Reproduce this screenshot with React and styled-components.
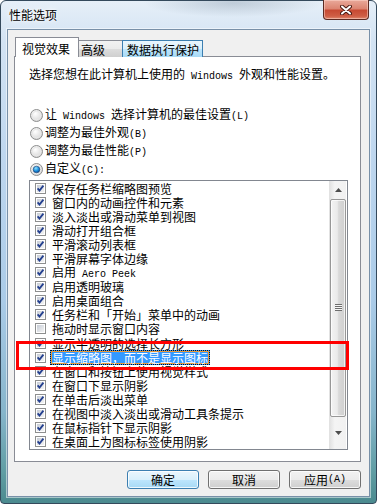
import React from 'react'
import styled, { createGlobalStyle } from 'styled-components'

const GlobalStyle = createGlobalStyle`
  html, body { margin: 0; padding: 0; background: #fff; }
  body {
    font-family: "Noto Sans CJK SC", "Liberation Sans", sans-serif;
    font-size: 12px;
    color: #000;
  }
`

const effects = [
  ['保存任务栏缩略图预览', true],
  ['窗口内的动画控件和元素', true],
  ['淡入淡出或滑动菜单到视图', true],
  ['滑动打开组合框', true],
  ['平滑滚动列表框', true],
  ['平滑屏幕字体边缘', true],
  ['启用 Aero Peek', true],
  ['启用透明玻璃', true],
  ['启用桌面组合', true],
  ['任务栏和「开始」菜单中的动画', true],
  ['拖动时显示窗口内容', false],
  ['显示半透明的选择长方形', true],
  ['显示缩略图，而不是显示图标', true, true],
  ['在窗口和按钮上使用视觉样式', true],
  ['在窗口下显示阴影', true],
  ['在单击后淡出菜单', true],
  ['在视图中淡入淡出或滑动工具条提示', true],
  ['在鼠标指针下显示阴影', true],
  ['在桌面上为图标标签使用阴影', true],
]

const radios = [
  ['让 Windows 选择计算机的最佳设置(L)', false],
  ['调整为最佳外观(B)', false],
  ['调整为最佳性能(P)', false],
  ['自定义(C):', true],
]

// SimSun draws ascii half width, so ascii runs get a 6px mono face
const mixed = (text) =>
  text.split(/([\x20-\x7e]+)/).map((part, i) =>
    /^[\x20-\x7e]+$/.test(part) ? <Latin key={i}>{part}</Latin> : part
  )

const CheckBox = ({ checked }) => (
  <svg width="11" height="11" viewBox="0 0 11 11">
    <defs>
      <linearGradient id="cbg" x1="0" y1="0" x2="1" y2="1">
        <stop offset="0" stopColor="#c6ccd6" />
        <stop offset="1" stopColor="#f4f4f4" />
      </linearGradient>
    </defs>
    <rect x="0.5" y="0.5" width="10" height="10" fill="#fff" stroke="#8e8f8f" />
    <rect x="2" y="2" width="7" height="7" fill="url(#cbg)" />
    {checked && (
      <path d="M2.6 5.4 L4.5 7.6 L8.4 2.6" fill="none" stroke="#233f8f" strokeWidth="1.8" />
    )}
  </svg>
)

const Radio = ({ checked }) => (
  <svg width="13" height="13" viewBox="0 0 13 13">
    <defs>
      <radialGradient id="rbg" cx="0.4" cy="0.35" r="0.7">
        <stop offset="0" stopColor="#ffffff" />
        <stop offset="1" stopColor="#d4d4d4" />
      </radialGradient>
      <radialGradient id="rdot" cx="0.4" cy="0.3" r="0.7">
        <stop offset="0" stopColor="#8fe0ff" />
        <stop offset="0.6" stopColor="#1c8fdc" />
        <stop offset="1" stopColor="#0b4f9a" />
      </radialGradient>
    </defs>
    <circle cx="6.5" cy="6.5" r="6" fill="url(#rbg)" stroke="#8e8f8f" />
    <circle cx="6.5" cy="6.5" r="4.2" fill="none" stroke="#e8e8e8" />
    {checked && <circle cx="6.5" cy="6.5" r="3.3" fill="url(#rdot)" stroke="#1b3f70" strokeWidth="0.6" />}
  </svg>
)

const App = () => {
  return (
    <>
      <GlobalStyle />
      <Win>
        <TitleBar>
          <Title>性能选项</Title>
          <Close>
            <svg width="12" height="10" viewBox="0 0 12 10">
              <path d="M2 1.5 L10 8.5 M10 1.5 L2 8.5" stroke="#4a1a12" strokeWidth="4" strokeLinecap="round" />
              <path d="M2 1.5 L10 8.5 M10 1.5 L2 8.5" stroke="#fff" strokeWidth="2" strokeLinecap="round" />
            </svg>
          </Close>
        </TitleBar>
        <Client>
          <TabRow>
            <Tab $active $pad="0 8px 0 6px">视觉效果</Tab>
            <Tab $pad="0 17px 0 1px">高级</Tab>
            <Tab $hover $pad="0 3px 0 4px">数据执行保护</Tab>
          </TabRow>
          <Panel>
            <Desc>{mixed('选择您想在此计算机上使用的 Windows 外观和性能设置。')}</Desc>
            <RadioGroup>
              {radios.map(([label, on]) => (
                <RadioRow key={label}>
                  <Radio checked={on} />
                  <span>{mixed(label)}</span>
                </RadioRow>
              ))}
            </RadioGroup>
            <ListBox>
              <Items>
                {effects.map(([label, on, sel]) => (
                  <Item key={label}>
                    <CheckBox checked={on} />
                    <ItemText $selected={sel}>{mixed(label)}</ItemText>
                  </Item>
                ))}
              </Items>
              <ScrollBar>
                <Arrow>
                  <svg width="7" height="4" viewBox="0 0 7 4"><path d="M0 4 L3.5 0 L7 4 Z" fill="#4d4d4d" /></svg>
                </Arrow>
                <Thumb>
                  <Grip />
                </Thumb>
                <Track />
                <Arrow $down>
                  <svg width="7" height="4" viewBox="0 0 7 4"><path d="M0 0 L3.5 4 L7 0 Z" fill="#4d4d4d" /></svg>
                </Arrow>
              </ScrollBar>
            </ListBox>
            <Marker />
          </Panel>
          <Buttons>
            <Button $default>确定</Button>
            <Button>取消</Button>
            <Button>{mixed('应用(A)')}</Button>
          </Buttons>
        </Client>
      </Win>
    </>
  )
}

const Win = styled.div`
  width: 377px;
  height: 504px;
  box-sizing: border-box;
  display: flex;
  flex-direction: column;
  padding: 0 6px 6px 6px;
  border: 1px solid #34495c;
  border-radius: 6px 6px 4px 4px;
  background:
    radial-gradient(ellipse 90px 14px at 62% 2px, rgba(120, 140, 160, 0.35), transparent),
    linear-gradient(180deg, #e6eff8 0%, #d3e3f3 8%, #bfd7ef 30%, #aacbe8 60%, #86b5cb 82%, #5f9da3 94%, #4b8a8f 100%);
`

const TitleBar = styled.div`
  height: 28px;
  flex: none;
  display: flex;
  justify-content: space-between;
  align-items: flex-start;
`

const Title = styled.div`
  margin: 7px 0 0 2px;
  line-height: 14px;
  text-shadow: 0 0 6px #fff, 0 0 3px #fff;
`

const Close = styled.div`
  width: 46px;
  height: 20px;
  margin: -1px 1px 0 0;
  box-sizing: border-box;
  border: 1px solid #5b2a22;
  border-top: none;
  border-radius: 0 0 4px 4px;
  display: flex;
  align-items: center;
  justify-content: center;
  background: linear-gradient(180deg, #e9a99a 0%, #dc8572 45%, #c74a33 55%, #cf5e45 85%, #e08a70 100%);
  box-shadow: inset 0 0 0 1px rgba(255, 220, 210, 0.5);
`

const Client = styled.div`
  flex: 1;
  display: flex;
  flex-direction: column;
  padding: 7px 8px 0 6px;
  background: #f0f0f0;
  border: 1px solid #7890a8;
  box-shadow: 0 0 0 1px rgba(255, 255, 255, 0.5);
`

const TabRow = styled.div`
  height: 20px;
  display: flex;
  align-items: flex-end;
  padding-left: 1px;
  margin-bottom: -1px;
`

const Tab = styled.div`
  box-sizing: border-box;
  height: ${p => (p.$active ? '20px' : '17px')};
  padding: ${p => p.$pad};
  line-height: ${p => (p.$active ? '21px' : '17px')};
  border: 1px solid ${p => (p.$hover ? '#3c7fb1' : '#898c95')};
  border-bottom: none;
  margin-left: ${p => (p.$active ? '0' : '-1px')};
  white-space: nowrap;
  background: ${p =>
    p.$active
      ? '#fff'
      : p.$hover
      ? 'linear-gradient(180deg, #eaf6fd 0%, #d9f0fc 50%, #bee6fd 50%, #a7d9f5 100%)'
      : 'linear-gradient(180deg, #f2f2f2 0%, #ebebeb 50%, #dddddd 50%, #cfcfcf 100%)'};
  position: ${p => (p.$active ? 'relative' : 'static')};
  z-index: 2;
  &:nth-child(2) { margin-left: 0; border-left: none; padding-left: 2px; }
`

const Panel = styled.div`
  position: relative;
  box-sizing: border-box;
  height: 406px;
  flex: none;
  display: flex;
  flex-direction: column;
  padding: 10px 12px 0 14px;
  background: #fff;
  border: 1px solid #898c95;
`

const Latin = styled.span`
  font-family: "Liberation Mono", monospace;
  font-size: 10px;
`

const Desc = styled.div`
  line-height: 14px;
`

const RadioGroup = styled.div`
  margin-top: 22px;
  display: flex;
  flex-direction: column;
`

const RadioRow = styled.div`
  height: 18px;
  display: flex;
  align-items: center;
  gap: 2px;
  padding-left: 1px;
  line-height: 14px;
`

const ListBox = styled.div`
  margin-top: 2px;
  width: 319px;
  height: 270px;
  box-sizing: border-box;
  border: 1px solid #828790;
  display: flex;
  background: #fff;
`

const Items = styled.div`
  flex: 1;
  min-width: 0;
`

const Item = styled.div`
  height: 14.1px;
  display: flex;
  align-items: center;
  padding-left: 5px;
  gap: 4px;
  white-space: nowrap;
`

const ItemText = styled.span`
  line-height: 13px;
  padding: 0 1px;
  border: 1px solid transparent;
  ${p =>
    p.$selected &&
    `
    background: #3399ff;
    color: #fff;
    outline: 1px dotted #111;
    outline-offset: -1px;
    box-shadow: inset 0 0 0 1px #e89a3c;
  `}
`

const ScrollBar = styled.div`
  width: 16px;
  margin-right: 1px;
  display: flex;
  flex-direction: column;
  background: linear-gradient(90deg, #e3e3e3 0%, #f4f4f4 30%, #f1f1f1 100%);
  border-left: 1px solid #e2e2e2;
`

const Arrow = styled.div`
  flex: none;
  display: flex;
  justify-content: center;
  align-items: ${p => (p.$down ? 'flex-start' : 'center')};
  padding-top: ${p => (p.$down ? '8px' : '0')};
  box-sizing: border-box;
  height: ${p => (p.$down ? '26px' : '18px')};
`

const Thumb = styled.div`
  height: 218px;
  flex: none;
  box-sizing: border-box;
  border: 1px solid #979797;
  border-radius: 2px;
  background: linear-gradient(90deg, #f3f3f3 0%, #eaeaea 45%, #d9d9d9 55%, #cfcfcf 100%);
  box-shadow: inset 0 0 0 1px rgba(255, 255, 255, 0.7);
  display: flex;
  align-items: center;
  justify-content: center;
`

const Grip = styled.div`
  width: 7px;
  height: 7px;
  margin-top: -2px;
  background: repeating-linear-gradient(180deg, #6e6e6e 0 1px, #f6f6f6 1px 2px);
`

const Track = styled.div`
  flex: 1;
`

const Marker = styled.div`
  position: absolute;
  left: 1px;
  top: 284px;
  width: 333px;
  height: 29px;
  box-sizing: border-box;
  border: 3px solid #ff0000;
  pointer-events: none;
`

const Buttons = styled.div`
  margin-top: 8px;
  display: flex;
  justify-content: flex-end;
  gap: 9px;
`

const Button = styled.div`
  width: 72px;
  height: 19px;
  box-sizing: border-box;
  border: 1px solid ${p => (p.$default ? '#3c7fb1' : '#707070')};
  border-radius: 3px;
  display: flex;
  align-items: center;
  justify-content: center;
  line-height: 14px;
  background: ${p =>
    p.$default
      ? 'linear-gradient(180deg, #eaf6fd 0%, #d9f0fc 50%, #bee6fd 50%, #a7d9f5 100%)'
      : 'linear-gradient(180deg, #f2f2f2 0%, #ebebeb 50%, #dddddd 50%, #cfcfcf 100%)'};
  box-shadow: inset 0 0 0 1px rgba(255, 255, 255, 0.8);
`

export default App
